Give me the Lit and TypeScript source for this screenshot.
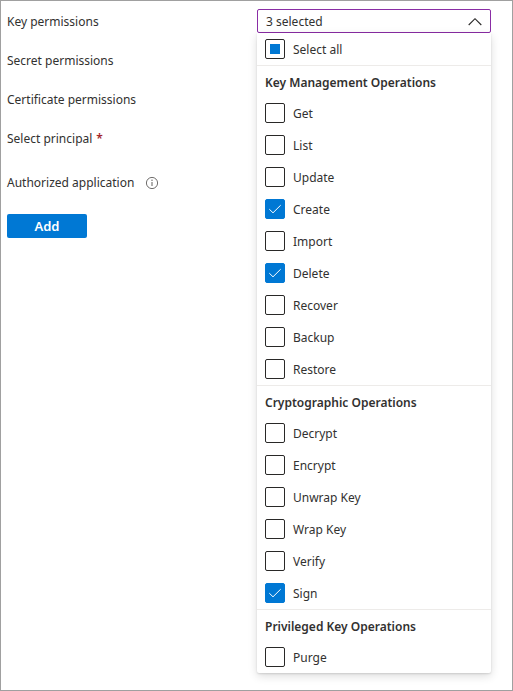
import { LitElement, html, css, svg } from "lit";
import { customElement, property, state } from "lit/decorators.js";

interface Group {
  title: string;
  items: string[];
}

const GROUPS: Group[] = [
  {
    title: "Key Management Operations",
    items: ["Get", "List", "Update", "Create", "Import", "Delete", "Recover", "Backup", "Restore"],
  },
  {
    title: "Cryptographic Operations",
    items: ["Decrypt", "Encrypt", "Unwrap Key", "Wrap Key", "Verify", "Sign"],
  },
  { title: "Privileged Key Operations", items: ["Purge"] },
];

const ALL = GROUPS.flatMap((g) => g.items);

@customElement("check-row")
class CheckRow extends LitElement {
  @property() label = "";
  @property({ type: Boolean }) checked = false;
  @property({ type: Boolean }) mixed = false;

  static styles = css`
    :host {
      display: block;
    }
    .row {
      display: flex;
      align-items: center;
      gap: 8px;
      height: 32px;
      padding: 0 8px;
      cursor: pointer;
    }
    .box {
      display: grid;
      flex: none;
      width: 20px;
      height: 20px;
    }
    .text {
      padding-top: 2px;
    }
    .input,
    .mark {
      grid-area: 1 / 1;
    }
    .input {
      appearance: none;
      box-sizing: border-box;
      width: 20px;
      height: 20px;
      margin: 0;
      border: 1px solid #292827;
      border-radius: 2px;
      background: #fff;
    }
    .input:checked {
      border-color: #0078d4;
      background: #0078d4;
    }
    .mark {
      pointer-events: none;
    }
  `;

  private onChange(e: Event) {
    this.dispatchEvent(
      new CustomEvent("toggle-row", { detail: (e.target as HTMLInputElement).checked })
    );
  }

  render() {
    const mark = this.mixed
      ? svg`<rect x="5" y="5" width="10" height="10" fill="#0078d4" />`
      : this.checked
        ? svg`<path d="M4.3 10.2L8 13.8L15.7 6.2" fill="none" stroke="#fff" stroke-width="1" />`
        : null;
    return html`
      <label class="row">
        <span class="box">
          <input
            class="input"
            type="checkbox"
            .checked=${this.checked}
            .indeterminate=${this.mixed}
            @change=${this.onChange}
          />
          <svg class="mark" width="20" height="20" viewBox="0 0 20 20" aria-hidden="true">${mark}</svg>
        </span>
        <span class="text">${this.label}</span>
      </label>
    `;
  }
}

@customElement("app-root")
class AppRoot extends LitElement {
  @state() private open = true;
  @state() private selected = new Set(["Create", "Delete", "Sign"]);

  static styles = css`
    :host {
      display: block;
      font-family: "Noto Sans", "Open Sans", sans-serif;
      font-size: 12px;
      line-height: 16px;
      color: #323130;
    }
    .frame {
      box-sizing: border-box;
      min-height: 100vh;
      display: grid;
      grid-template-columns: 250px minmax(0, 1fr);
      align-items: start;
      padding: 8px 21px 17px 6px;
      border: 1px solid #a0a0a0;
      background: #fff;
    }
    .side {
      display: grid;
      justify-items: start;
      gap: 20px;
    }
    .fields {
      display: grid;
      gap: 15px;
    }
    .field {
      display: flex;
      align-items: center;
      box-sizing: border-box;
      height: 24px;
      padding-top: 2px;
      gap: 4px;
    }
    .field.info {
      gap: 11px;
    }
    .star {
      color: #a4262c;
      font-weight: 600;
    }
    .icon {
      display: block;
      flex: none;
    }
    .add {
      width: 80px;
      height: 24px;
      padding: 0 0 1px;
      border: 0;
      border-radius: 2px;
      background: #0078d4;
      color: #fff;
      font: inherit;
      font-size: 13px;
      font-weight: 600;
      cursor: pointer;
    }
    .combo {
      display: flex;
      align-items: center;
      justify-content: space-between;
      box-sizing: border-box;
      width: 100%;
      height: 24px;
      padding: 2px 8px 0;
      border: 1px solid #8a2da5;
      border-radius: 2px;
      background: #fff;
      color: inherit;
      font: inherit;
      cursor: pointer;
    }
    .panel {
      border-radius: 0 0 2px 2px;
      background: #fff;
      box-shadow: 0 3px 10px rgba(0, 0, 0, 0.14), 0 1px 2px rgba(0, 0, 0, 0.12);
    }
    .title {
      box-sizing: border-box;
      height: 32px;
      margin: 0;
      padding: 0 8px;
      border-top: 1px solid #edebe9;
      font-size: 12px;
      font-weight: 600;
      line-height: 33px;
    }
  `;

  private toggle(name: string, on: boolean) {
    const next = new Set(this.selected);
    if (on) next.add(name);
    else next.delete(name);
    this.selected = next;
  }

  render() {
    const count = this.selected.size;
    return html`
      <main class="frame">
        <div class="side">
          <div class="fields">
            <label class="field" for="key-permissions">Key permissions</label>
            <div class="field">Secret permissions</div>
            <div class="field">Certificate permissions</div>
            <div class="field">Select principal <span class="star">*</span></div>
          </div>
          <div class="field info">
            Authorized application
            <svg class="icon" width="14" height="14" viewBox="0 0 14 14" role="img" aria-label="Information">
              <circle cx="7" cy="7" r="5.6" fill="none" stroke="#605e5c" stroke-width="0.9" />
              <path d="M7 6v4" stroke="#605e5c" stroke-width="1" />
              <circle cx="7" cy="4.3" r="0.7" fill="#605e5c" />
            </svg>
          </div>
          <button class="add" type="button">Add</button>
        </div>
        <div>
          <button
            class="combo"
            id="key-permissions"
            type="button"
            aria-expanded=${this.open}
            aria-controls="key-panel"
            @click=${() => (this.open = !this.open)}
          >
            <span>${count} selected</span>
            <svg class="icon" width="14" height="14" viewBox="0 0 14 14" aria-hidden="true">
              <path d="M0.7 10L7 3.7L13.3 10" fill="none" stroke="#292827" stroke-width="1.1" />
            </svg>
          </button>
          <div class="panel" id="key-panel" ?hidden=${!this.open}>
            <check-row
              label="Select all"
              .checked=${count === ALL.length}
              .mixed=${count > 0 && count < ALL.length}
              @toggle-row=${(e: CustomEvent) => (this.selected = new Set(e.detail ? ALL : []))}
            ></check-row>
            ${GROUPS.map(
              (g) => html`
                <section>
                  <h2 class="title">${g.title}</h2>
                  ${g.items.map(
                    (name) => html`<check-row
                      label=${name}
                      .checked=${this.selected.has(name)}
                      @toggle-row=${(e: CustomEvent) => this.toggle(name, e.detail)}
                    ></check-row>`
                  )}
                </section>
              `
            )}
          </div>
        </div>
      </main>
    `;
  }
}
